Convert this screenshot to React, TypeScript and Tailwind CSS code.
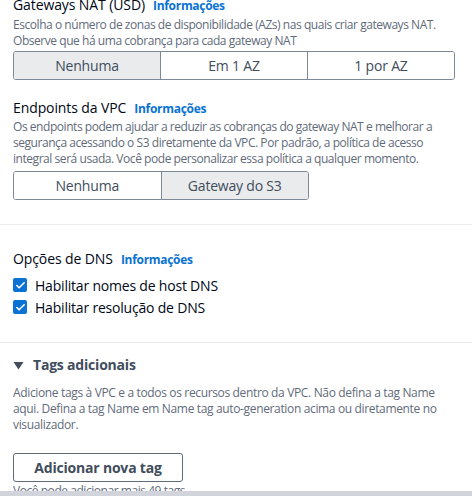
import { Check } from 'lucide-react';

function Info() {
  return <span className="ml-2 text-[12px] font-bold tracking-[-0.3px] text-[#0972d3]">Informações</span>;
}

function Segmented({ options, selected, width }: { options: string[]; selected: number; width: string }) {
  return (
    <div className={`flex h-[29px] overflow-hidden rounded-[3px] border border-[#7d8998] ${width}`}>
      {options.map((o, i) => (
        <div
          key={o}
          className={`flex flex-1 items-center justify-center text-[14px] tracking-[-0.2px] text-[#414d5c] ${i > 0 ? 'border-l border-[#7d8998]' : ''} ${i === selected ? 'bg-[#e9ebed]' : 'bg-white'}`}
        >
          {o}
        </div>
      ))}
    </div>
  );
}

function Box({ label }: { label: string }) {
  return (
    <div className="flex h-[22px] items-center gap-2">
      <span className="flex h-[14px] w-[14px] items-center justify-center rounded-[2px] bg-[#0972d3]">
        <Check size={11} strokeWidth={3.5} color="white" />
      </span>
      <span className="text-[14px] tracking-[-0.2px] text-[#000716]">{label}</span>
    </div>
  );
}

export default function App() {
  return (
    <div className="h-[496px] w-[472px] overflow-hidden bg-white" style={{ fontFamily: '"Open Sans", sans-serif' }}>
      <div className="pl-[13px] pr-[17px]">
        <div className="-mt-[5px] text-[14px] leading-[20px] tracking-[-0.1px] text-[#000716]">
          Gateways NAT (USD)
          <Info />
        </div>
        <p className="mt-[1px] text-[12px] leading-[16px] tracking-[-0.45px] text-[#5f6b7a]">
          Escolha o número de zonas de disponibilidade (AZs) nas quais criar gateways NAT. Observe que há uma cobrança para cada gateway NAT
        </p>
        <div className="mt-[2px]">
          <Segmented options={['Nenhuma', 'Em 1 AZ', '1 por AZ']} selected={0} width="w-full" />
        </div>

        <div className="mt-[18px] text-[14px] leading-[20px] tracking-[-0.1px] text-[#000716]">
          Endpoints da VPC
          <Info />
        </div>
        <p className="text-[12px] leading-[16px] tracking-[-0.45px] text-[#5f6b7a]">
          Os endpoints podem ajudar a reduzir as cobranças do gateway NAT e melhorar a segurança acessando o S3 diretamente da VPC. Por padrão, a política de acesso integral será usada. Você pode personalizar essa política a qualquer momento.
        </p>
        <div className="mt-[4px]">
          <Segmented options={['Nenhuma', 'Gateway do S3']} selected={1} width="w-[296px]" />
        </div>
      </div>

      <div className="mt-[24px] border-t border-[#e9ebed]" />

      <div className="pl-[13px] pr-[17px] pt-[24px]">
        <div className="text-[14px] leading-[20px] tracking-[-0.1px] text-[#000716]">
          Opções de DNS
          <Info />
        </div>
        <div className="mt-[4px]">
          <Box label="Habilitar nomes de host DNS" />
          <Box label="Habilitar resolução de DNS" />
        </div>
      </div>

      <div className="mt-[24px] border-t border-[#e9ebed]" />

      <div className="pl-[13px] pr-[17px] pt-[12px]">
        <div className="flex items-center gap-[9px] text-[14px] font-bold leading-[20px] tracking-[-0.2px] text-[#414d5c]">
          <svg width="11" height="9" viewBox="0 0 11 9">
            <path d="M0.5 1 L10.5 1 L5.5 8.5 Z" fill="#414d5c" />
          </svg>
          Tags adicionais
        </div>
        <p className="mt-[10px] text-[12px] leading-[16px] tracking-[-0.35px] text-[#5f6b7a]">
          Adicione tags à VPC e a todos os recursos dentro da VPC. Não defina a tag Name aqui. Defina a tag Name em Name tag auto-generation acima ou diretamente no visualizador.
        </p>
        <button className="mt-[20px] flex h-[29px] w-[170px] items-center justify-center rounded-[3px] border border-[#5f6b7a] bg-white text-[14px] font-bold tracking-[-0.2px] text-[#414d5c]">
          Adicionar nova tag
        </button>
        <p className="mt-[3px] h-[6px] overflow-hidden text-[12px] leading-[12px] tracking-[-0.45px] text-[#5f6b7a]">
          Você pode adicionar mais 49 tags.
        </p>
      </div>
      <div className="h-[10px] bg-[#d1d5db]" />
    </div>
  );
}
